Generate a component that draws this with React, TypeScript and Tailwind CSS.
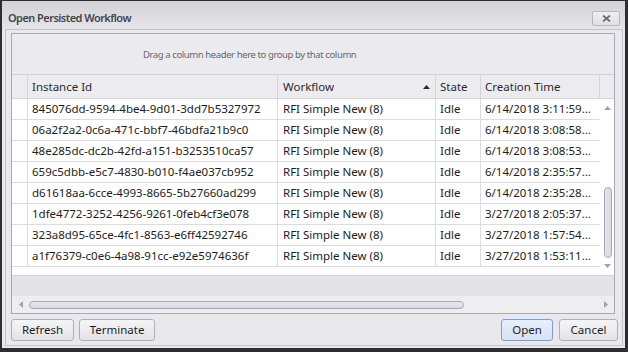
const rows = [
  { id: "845076dd-9594-4be4-9d01-3dd7b5327972", time: "6/14/2018 3:11:59..." },
  { id: "06a2f2a2-0c6a-471c-bbf7-46bdfa21b9c0", time: "6/14/2018 3:08:58..." },
  { id: "48e285dc-dc2b-42fd-a151-b3253510ca57", time: "6/14/2018 3:08:53..." },
  { id: "659c5dbb-e5c7-4830-b010-f4ae037cb952", time: "6/14/2018 2:35:57..." },
  { id: "d61618aa-6cce-4993-8665-5b27660ad299", time: "6/14/2018 2:35:28..." },
  { id: "1dfe4772-3252-4256-9261-0feb4cf3e078", time: "3/27/2018 2:05:37..." },
  { id: "323a8d95-65ce-4fc1-8563-e6ff42592746", time: "3/27/2018 1:57:54..." },
  { id: "a1f76379-c0e6-4a98-91cc-e92e5974636f", time: "3/27/2018 1:53:11..." },
];

function Arrow({ dir, color = "#a2a2a8" }: { dir: "up" | "down" | "left" | "right"; color?: string }) {
  const pts = {
    up: "0,4 3.5,0 7,4",
    down: "0,0 3.5,4 7,0",
    left: "4,0 0,3.5 4,7",
    right: "0,0 4,3.5 0,7",
  }[dir];
  const vertical = dir === "up" || dir === "down";
  return (
    <svg width={vertical ? 7 : 4} height={vertical ? 4 : 7} viewBox={vertical ? "0 0 7 4" : "0 0 4 7"}>
      <polygon points={pts} fill={color} />
    </svg>
  );
}

function Button({ label, width, primary }: { label: string; width: string; primary?: boolean }) {
  return (
    <div
      className={`${width} h-[22px] flex items-center justify-center rounded-[3px] border text-[11.5px] text-[#1e1e1e] ${
        primary
          ? "border-[#7d9bd6] bg-linear-to-b from-[#e8effc] to-[#d6e2f8]"
          : "border-[#aeaeb4] bg-linear-to-b from-[#f5f5f7] to-[#e3e3e7]"
      }`}
    >
      {label}
    </div>
  );
}

export default function App() {
  return (
    <div className="w-[628px] h-[352px] flex flex-col overflow-hidden bg-[#e9e9ed] border-[#2e2e32] border-l-2 border-t border-r-[3px] border-b-4 font-['Noto_Sans',sans-serif]">
      {/* title bar */}
      <div className="h-[28px] flex items-center justify-between pt-[6px] pl-[6px] pr-[5px] bg-linear-to-b from-[#d3d3d7] to-[#e5e5e9]">
        <span className="text-[11px] font-semibold text-[#44444c] tracking-[-0.55px]">Open Persisted Workflow</span>
        <div className="w-[28px] h-[15px] flex items-center justify-center rounded-[2px] border border-[#b6b6bc] bg-linear-to-b from-[#f0f0f2] to-[#e0e0e4]">
          <svg width="9" height="7" viewBox="0 0 9 7">
            <path d="M1 0.5 L8 6.5 M8 0.5 L1 6.5" stroke="#6c6c76" strokeWidth="1.8" />
          </svg>
        </div>
      </div>

      {/* frame */}
      <div className="ml-[3px] mr-[2px] h-[317px] flex flex-col border border-[#c4c4ca] pt-[3px] pl-[5px] pr-[7px]">
        {/* grid */}
        <div className="w-[604px] h-[281px] flex flex-col border border-[#a9a9b1] bg-white">
          <div className="h-[41px] flex items-center pl-[131px] pt-[3px] bg-[#ebebef] border-b border-[#cfcfd5] text-[9.5px] tracking-[-0.4px] text-[#66666c]">
            Drag a column header here to group by that column
          </div>

          <div className="h-[24px] flex bg-[#ececf0] border-b border-[#d4d4d9] text-[11.5px] text-[#2a2a2e]">
            <div className="w-[16px] border-r border-[#d4d4d9]" />
            <div className="w-[250px] flex items-center pl-[4px] border-r border-[#d4d4d9]">Instance Id</div>
            <div className="w-[158px] flex items-center justify-between pl-[5px] pr-[5px] border-r border-[#d4d4d9]">
              <span>Workflow</span>
              <Arrow dir="up" color="#2a2a2e" />
            </div>
            <div className="w-[45px] flex items-center pl-[4px] border-r border-[#d4d4d9]">State</div>
            <div className="w-[119px] flex items-center pl-[4px] border-r border-[#d4d4d9]">Creation Time</div>
            <div className="flex-1" />
          </div>

          <div className="h-[176px] flex">
            <div className="w-[588px] flex flex-col">
              {rows.map((r) => (
                <div key={r.id} className="h-[21px] flex border-b border-[#dcdce0] text-[11.5px] text-[#1c1c1c]">
                  <div className="w-[16px] border-r border-[#dcdce0]" />
                  <div className="w-[250px] flex items-center pl-[4px] border-r border-[#dcdce0] whitespace-nowrap">{r.id}</div>
                  <div className="w-[158px] flex items-center pl-[5px] border-r border-[#dcdce0]">RFI Simple New (8)</div>
                  <div className="w-[45px] flex items-center pl-[4px] border-r border-[#dcdce0]">Idle</div>
                  <div className="w-[119px] flex items-center pl-[4px] whitespace-nowrap overflow-hidden">{r.time}</div>
                </div>
              ))}
            </div>
            <div className="w-[14px] flex flex-col items-center pl-[1px]">
              <div className="mt-[7px]">
                <Arrow dir="up" />
              </div>
              <div className="mt-[77px] w-[8px] h-[71px] rounded-full border border-[#a9a9b1] bg-linear-to-r from-[#e4e6ee] to-[#d8dbe6]" />
              <div className="mt-[6px]">
                <Arrow dir="down" />
              </div>
            </div>
          </div>

          <div className="h-[21px] bg-[#e4e4e8] border-t border-[#d2d2d8]" />

          <div className="h-[17px] flex items-center bg-[#eeeef1] pl-[7px] pr-[6px]">
            <Arrow dir="left" />
            <div className="ml-[6px] w-[435px] h-[8px] rounded-full border border-[#a9a9b1] bg-linear-to-b from-[#e6e8f0] to-[#d8dbe6]" />
            <div className="ml-auto">
              <Arrow dir="right" />
            </div>
          </div>
        </div>

        {/* buttons */}
        <div className="mt-[5px] mr-[-3px] flex">
          <Button label="Refresh" width="w-[63px]" />
          <div className="ml-[5px]">
            <Button label="Terminate" width="w-[76px]" />
          </div>
          <div className="ml-auto">
            <Button label="Open" width="w-[52px]" primary />
          </div>
          <div className="ml-[6px]">
            <Button label="Cancel" width="w-[59px]" />
          </div>
        </div>
      </div>
    </div>
  );
}
